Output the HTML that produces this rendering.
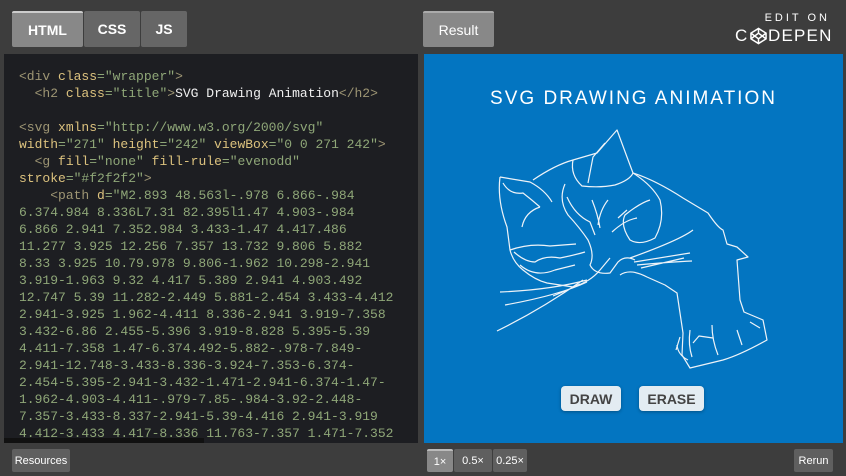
<!DOCTYPE html>
<html><head><style>
*{margin:0;padding:0;box-sizing:border-box}
body{width:846px;height:476px;background:#3d3d3d;position:relative;overflow:hidden;font-family:"Liberation Sans",sans-serif}
.tab{position:absolute;top:11px;height:36px;color:#fff;font-size:14px;font-weight:bold;display:flex;align-items:center;justify-content:center;border-radius:2px}
#code{position:absolute;left:4px;top:54px;width:414px;height:389px;background:#1d1e22;overflow:hidden}
pre{font-family:"Liberation Mono",monospace;font-size:13px;line-height:17px;color:#8fa778;position:absolute;left:15px;top:14px;white-space:pre}
.t{color:#9e9674}.a{color:#dcc27e}.w{color:#f0f0f0}
#res{position:absolute;left:424px;top:54px;width:419px;height:389px;background:#0375c1}
.h{position:absolute;left:0;width:100%;top:34px;text-align:center;color:#fff;font-size:19px;letter-spacing:2px}
.btn{position:absolute;top:332px;height:25px;background:#e3ecf2;color:#444;font-weight:bold;font-size:14px;display:flex;align-items:center;justify-content:center;border-radius:4px;box-shadow:0 1px 3px rgba(0,0,0,.3)}
.sb{position:absolute;top:449px;height:23px;background:#5f5f5f;color:#fff;font-size:11px;display:flex;align-items:center;justify-content:center;border-radius:2px}
.cp{position:absolute;top:26px;color:#fff;font-size:17px;letter-spacing:1.2px}
</style></head><body>
<div class="tab" style="left:12px;width:71px;background:#888;border-top:2px solid #ccc">HTML</div>
<div class="tab" style="left:84px;width:56px;background:#666">CSS</div>
<div class="tab" style="left:141px;width:46px;background:#666">JS</div>
<div class="tab" style="left:423px;width:71px;background:#888;border-top:2px solid #aaa;font-weight:normal">Result</div>
<div style="position:absolute;right:16px;top:12px;color:#fff;font-size:11px;letter-spacing:3px;text-align:right">EDIT ON</div>
<div class="cp" style="left:735px">C</div>
<div class="cp" style="left:768px">DEPEN</div>
<svg style="position:absolute;left:750px;top:27px" width="17" height="18" viewBox="0 0 18 18" fill="none" stroke="#fff" stroke-width="1.6"><path d="M9 1L17 6V12L9 17L1 12V6Z M9 1V6 M9 17V12 M1 6L9 12L17 6 M1 12L9 6L17 12"/></svg>
<div id="code"><pre><span class="t">&lt;div</span> <span class="a">class</span>="wrapper"<span class="t">&gt;</span>
  <span class="t">&lt;h2</span> <span class="a">class</span>="title"<span class="t">&gt;</span><span class="w">SVG Drawing Animation</span><span class="t">&lt;/h2&gt;</span>

<span class="t">&lt;svg</span> <span class="a">xmlns</span>="http://www.w3.org/2000/svg"
<span class="a">width</span>="271" <span class="a">height</span>="242" <span class="a">viewBox</span>="0 0 271 242"<span class="t">&gt;</span>
  <span class="t">&lt;g</span> <span class="a">fill</span>="none" <span class="a">fill-rule</span>="evenodd"
<span class="a">stroke</span>="#f2f2f2"<span class="t">&gt;</span>
    <span class="t">&lt;path</span> <span class="a">d</span>="M2.893 48.563l-.978 6.866-.984
6.374.984 8.336L7.31 82.395l1.47 4.903-.984
6.866 2.941 7.352.984 3.433-1.47 4.417.486
11.277 3.925 12.256 7.357 13.732 9.806 5.882
8.33 3.925 10.79.978 9.806-1.962 10.298-2.941
3.919-1.963 9.32 4.417 5.389 2.941 4.903.492
12.747 5.39 11.282-2.449 5.881-2.454 3.433-4.412
2.941-3.925 1.962-4.411 8.336-2.941 3.919-7.358
3.432-6.86 2.455-5.396 3.919-8.828 5.395-5.39
4.411-7.358 1.47-6.374.492-5.882-.978-7.849-
2.941-12.748-3.433-8.336-3.924-7.353-6.374-
2.454-5.395-2.941-3.432-1.471-2.941-6.374-1.47-
1.962-4.903-4.411-.979-7.85-.984-3.92-2.448-
7.357-3.433-8.337-2.941-5.39-4.416 2.941-3.919
4.412-3.433 4.417-8.336 11.763-7.357 1.471-7.352</pre>
<div style="position:absolute;left:0;bottom:0;width:200px;height:5px;background:#111"></div></div>
<div id="res"><div class="h">SVG DRAWING ANIMATION</div>
<div class="btn" style="left:137px;width:60px">DRAW</div>
<div class="btn" style="left:215px;width:65px">ERASE</div></div>
<svg style="position:absolute;left:0;top:0" width="846" height="476" fill="none" stroke="#eef3f8" stroke-width="1.2" stroke-linejoin="round">
<path d="M500 177Q497 200 507 227L510 250Q513 262 523 270Q535 280 547 283L573 287Q590 282 600 270L610 258"/>
<path d="M500 177L530 182Q545 190 552 202M503 183Q510 195 523 193Q532 200 540 207M522 227Q525 212 540 207"/>
<path d="M533 180Q555 165 573 160L597 153L617 130L627 157L633 173Q655 180 683 198L708 213Q718 228 723 230L727 244L737 247L748 257L737 260L740 300L744 312L763 320L767 340Q740 355 723 360L690 368L682 355L683 333L677 293L665 285L647 277Q630 268 620 275"/>
<path d="M588 183L593 157L605 143M573 160Q570 175 582 186Q600 188 615 185Q630 180 633 173"/>
<path d="M633 173Q652 185 660 200Q665 220 655 238Q640 246 630 240Q620 225 625 215Q640 203 650 200M618 218L627 210M612 232Q625 220 637 218"/>
<path d="M565 184Q558 200 568 215Q580 228 588 240Q595 255 590 265Q595 275 610 273L618 262Q625 255 635 260"/>
<path d="M510 250Q530 243 550 246L576 244M514 252Q525 262 535 262Q545 255 560 258Q575 255 585 252M520 265Q535 278 555 270L575 265"/>
<path d="M567 197Q575 215 590 222L595 235M592 200Q598 215 600 228M608 200Q600 210 598 225"/>
<path d="M500 292Q550 290 587 280M505 305Q560 295 587 282M497 331Q540 310 583 280M553 296Q568 290 580 284"/>
<path d="M630 258Q680 240 693 230M634 262L690 253M637 265Q670 262 692 261M641 268L684 258"/>
<path d="M690 330Q688 345 692 357M712 325Q712 340 718 355M737 330L742 345M750 322L760 328M677 345Q678 355 688 360"/>
<path d="M676 350L680 337M693 343L699 336L713 338"/>
</svg>
<div class="sb" style="left:12px;width:58px">Resources</div>
<div class="sb" style="left:427px;width:26px;background:#888;border-top:2px solid #bbb">1×</div>
<div class="sb" style="left:454px;width:38px">0.5×</div>
<div class="sb" style="left:493px;width:34px">0.25×</div>
<div class="sb" style="left:794px;width:39px">Rerun</div>
</body></html>
